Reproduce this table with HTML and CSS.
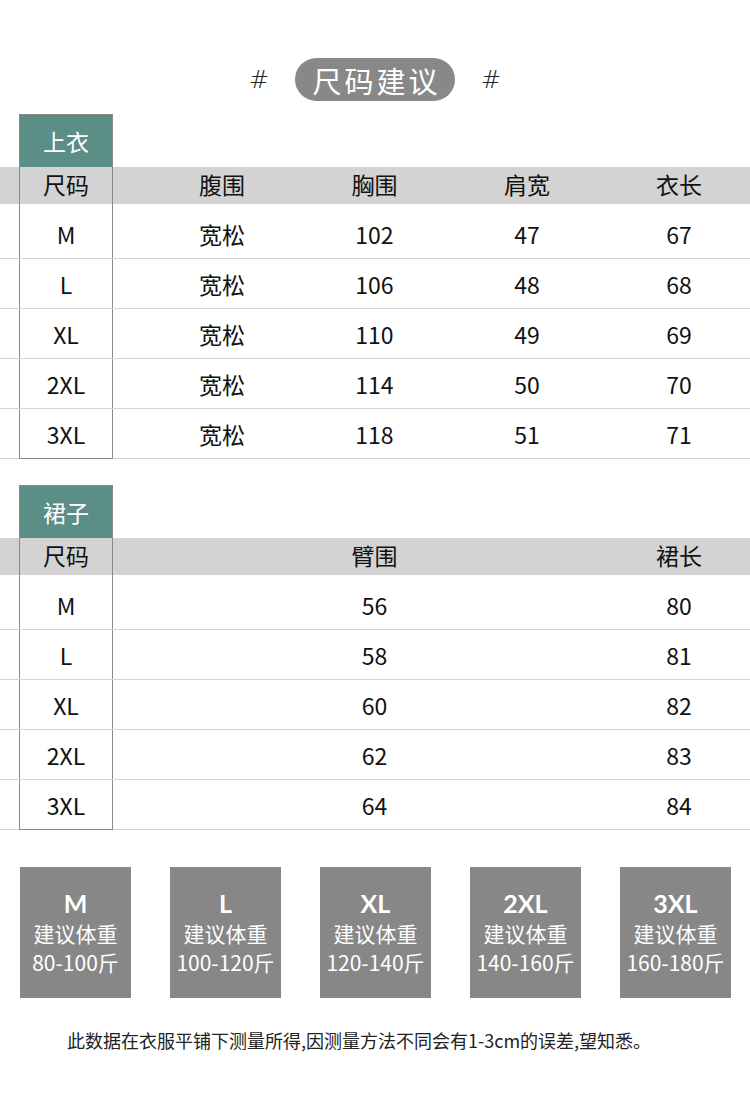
FILE: index.html
```html
<!DOCTYPE html>
<html lang="zh">
<head>
<meta charset="utf-8">
<title>尺码建议</title>
<link rel="stylesheet" href="styles.css">
</head>
<body>
<div class="page">
  <header class="title-row">
    <span class="hash">#</span>
    <h1 class="pill">尺码建议</h1>
    <span class="hash">#</span>
  </header>

  <section class="size-table">
    <div class="tag">上衣</div>
    <div class="row head">
      <div class="c size">尺码</div><div class="c gap"></div>
      <div class="c">腹围</div><div class="c">胸围</div><div class="c">肩宽</div><div class="c">衣长</div>
    </div>
    <div class="row first">
      <div class="c size">M</div><div class="c gap"></div>
      <div class="c">宽松</div><div class="c">102</div><div class="c">47</div><div class="c">67</div>
    </div>
    <div class="row">
      <div class="c size">L</div><div class="c gap"></div>
      <div class="c">宽松</div><div class="c">106</div><div class="c">48</div><div class="c">68</div>
    </div>
    <div class="row">
      <div class="c size">XL</div><div class="c gap"></div>
      <div class="c">宽松</div><div class="c">110</div><div class="c">49</div><div class="c">69</div>
    </div>
    <div class="row">
      <div class="c size">2XL</div><div class="c gap"></div>
      <div class="c">宽松</div><div class="c">114</div><div class="c">50</div><div class="c">70</div>
    </div>
    <div class="row last">
      <div class="c size">3XL</div><div class="c gap"></div>
      <div class="c">宽松</div><div class="c">118</div><div class="c">51</div><div class="c">71</div>
    </div>
  </section>

  <section class="size-table second">
    <div class="tag">裙子</div>
    <div class="row head">
      <div class="c size">尺码</div><div class="c gap"></div>
      <div class="c"></div><div class="c">臂围</div><div class="c"></div><div class="c">裙长</div>
    </div>
    <div class="row first">
      <div class="c size">M</div><div class="c gap"></div>
      <div class="c"></div><div class="c">56</div><div class="c"></div><div class="c">80</div>
    </div>
    <div class="row">
      <div class="c size">L</div><div class="c gap"></div>
      <div class="c"></div><div class="c">58</div><div class="c"></div><div class="c">81</div>
    </div>
    <div class="row">
      <div class="c size">XL</div><div class="c gap"></div>
      <div class="c"></div><div class="c">60</div><div class="c"></div><div class="c">82</div>
    </div>
    <div class="row">
      <div class="c size">2XL</div><div class="c gap"></div>
      <div class="c"></div><div class="c">62</div><div class="c"></div><div class="c">83</div>
    </div>
    <div class="row last">
      <div class="c size">3XL</div><div class="c gap"></div>
      <div class="c"></div><div class="c">64</div><div class="c"></div><div class="c">84</div>
    </div>
  </section>

  <section class="weights">
    <div class="wbox"><strong>M</strong><span>建议体重</span><span>80-100斤</span></div>
    <div class="wbox"><strong>L</strong><span>建议体重</span><span>100-120斤</span></div>
    <div class="wbox"><strong>XL</strong><span>建议体重</span><span>120-140斤</span></div>
    <div class="wbox"><strong>2XL</strong><span>建议体重</span><span>140-160斤</span></div>
    <div class="wbox"><strong>3XL</strong><span>建议体重</span><span>160-180斤</span></div>
  </section>

  <p class="note">此数据在衣服平铺下测量所得,因测量方法不同会有1-3cm的误差,望知悉。</p>
</div>
</body>
</html>
```

FILE: styles.css
```css
html, body {
  margin: 0;
  padding: 0;
  background: #ffffff;
  overflow: hidden;
}

body {
  font-family: "Noto Sans CJK SC", "Noto Sans", sans-serif;
  color: #111111;
  width: 750px;
}

.page {
  width: 750px;
  padding-top: 58px;
  overflow: hidden;
}

.title-row {
  display: flex;
  align-items: center;
  justify-content: center;
  gap: 26px;
  height: 43px;
}

.hash {
  font-family: "DejaVu Sans", sans-serif;
  font-size: 24px;
  font-weight: 300;
  color: #222222;
  line-height: 1;
}

.pill {
  margin: 0;
  width: 160px;
  height: 43px;
  border-radius: 22px;
  background: #888888;
  color: #ffffff;
  font-size: 29px;
  font-weight: 400;
  letter-spacing: 3px;
  text-indent: 3px;
  display: flex;
  align-items: center;
  justify-content: center;
}

.size-table {
  margin-top: 13px;
}

.size-table.second {
  margin-top: 26px;
}

.tag {
  margin-left: 19px;
  width: 94px;
  height: 53px;
  box-sizing: border-box;
  background: #5a8e87;
  border: 1px solid #8a8a8a;
  border-bottom: none;
  color: #ffffff;
  font-size: 23px;
  display: flex;
  align-items: center;
  justify-content: center;
}

.row {
  display: grid;
  grid-template-columns: 94px 33px 152px 153px 152px 152px;
  padding-left: 19px;
  height: 50px;
  box-sizing: border-box;
  border-bottom: 1px solid #d2d2d2;
  width: 755px;
  font-size: 23px;
}

.row.head {
  height: 37px;
  background: #d3d3d3;
  border-bottom: none;
}

.row.first {
  height: 55px;
  padding-top: 6px;
}

.row.first .size {
  margin-top: -6px;
  padding-top: 6px;
}

.c {
  display: flex;
  align-items: center;
  justify-content: center;
  line-height: 1;
  padding-top: 1px;
  box-sizing: border-box;
}

.row.head .c {
  padding-top: 0;
  padding-bottom: 3px;
}

.size {
  border-left: 1px solid #8a8a8a;
  border-right: 1px solid #8a8a8a;
}

.row.last .size {
  border-bottom: 1px solid #8a8a8a;
  margin-bottom: -1px;
}

.weights {
  display: flex;
  gap: 39px;
  padding-left: 20px;
  margin-top: 37px;
}

.wbox {
  width: 111px;
  height: 131px;
  background: #878787;
  color: #ffffff;
  display: flex;
  flex-direction: column;
  align-items: center;
  justify-content: center;
  font-size: 21px;
  white-space: nowrap;
}

.wbox > * {
  display: block;
  height: 29px;
  line-height: 29px;
}

.wbox strong {
  font-family: Lato, "Noto Sans", sans-serif;
  font-size: 25px;
  font-weight: 700;
  padding-bottom: 1px;
}

.note {
  margin: 30px 0 0 0;
  padding-left: 67px;
  font-size: 18px;
  line-height: 24px;
  color: #222222;
}
```
